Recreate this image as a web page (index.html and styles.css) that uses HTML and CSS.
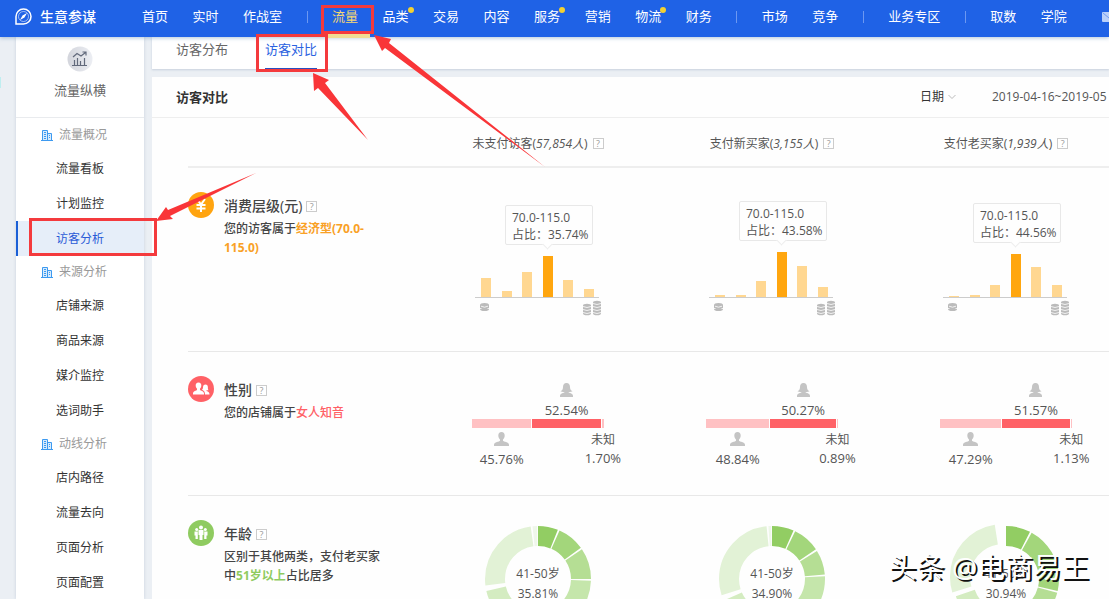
FILE: index.html
```
<!DOCTYPE html>
<html lang="zh-CN">
<head>
    <meta charset="UTF-8">
    <meta name="viewport" content="width=device-width, initial-scale=1.0">
    <title>生意参谋</title>
    <link rel="stylesheet" href="styles.css">
</head>
<body>
    <svg class="sprite" aria-hidden="true">
        <symbol id="building" viewBox="0 0 12 12">
            <path fill="#3d9af0" fill-opacity=".2" d="M1.500 1.500h5v3h4v7h-9z"/>
            <path fill="none" stroke="currentColor" d="M0 11.500h12M1.500 11V1.500h5V11M6.500 4.500h4V11M3 3.500h2M3 5.500h2M3 7.500h2M3 9.500h2M8 6.500h1M8 8.500h1"/>
        </symbol>
        <symbol id="man" viewBox="0 0 15 14">
            <path fill="currentColor" d="M7.500 0C5.400 0 4.300 1.400 4.300 3.500c0 1.800.7 3.200 1.700 4v1.300C5.600 9.800 0 9.800 0 12.800V14h15v-1.200c0-3-5.600-3-6-4V7.500c1-.8 1.700-2.200 1.700-4C10.700 1.400 9.600 0 7.500 0z"/>
        </symbol>
        <symbol id="woman" viewBox="0 0 15 14">
            <path fill="currentColor" d="M7.500 0C5 0 4 1.800 4 4c0 2-.5 3.300-2.500 4.300 1.200.8 2.600.9 4 .7C5.200 10.200 1 10 1 12.800V14h13v-1.200C14 10 9.800 10.200 9.500 9c1.400.2 2.800.1 4-.7C11.500 7.300 11 6 11 4c0-2.200-1-4-3.500-4z"/>
        </symbol>
        <symbol id="coin-low" viewBox="0 0 9 16">
            <path fill="#bbb" d="M0 5a4.500 2 0 0 1 9 0v4a4.500 2 0 0 1-9 0z"/>
            <path fill="none" stroke="#fff" stroke-width=".8" d="M1 6.200q3.500 2 7 0M0 8.500h1.500M7.500 8.500H9"/>
        </symbol>
        <symbol id="coin-high" viewBox="0 0 18 16">
            <path fill="#bbb" d="M0 5.500a4 1.800 0 0 1 8 0v8a4 1.800 0 0 1-8 0zM10 2.500a4 1.800 0 0 1 8 0v11a4 1.800 0 0 1-8 0z"/>
            <path fill="none" stroke="#fff" stroke-width=".8" d="M0 6.500q4 2 8 0M0 9.500q4 2 8 0M0 12.500q4 2 8 0M10 3.500q4 2 8 0M10 6.500q4 2 8 0M10 9.500q4 2 8 0M10 12.500q4 2 8 0"/>
        </symbol>
    </svg>

    <header class="topbar">
        <a class="brand" href="#">
            <svg class="brand-icon" viewBox="0 0 17 17">
                <path fill="none" stroke="#fff" stroke-width="1.500" d="M1 16V8.500A7.500 7.500 0 1 1 8.500 16z"/>
                <circle cx="8.500" cy="8.500" r="5" fill="none" stroke="#fff" stroke-width=".8" opacity=".7"/>
                <path fill="#fff" d="M12 5L9.500 9.500 5 12l2.500-4.500z"/>
            </svg>
            <span>生意参谋</span>
        </a>
        <nav class="topnav">
            <a href="#">首页</a>
            <a href="#">实时</a>
            <a href="#">作战室</a>
            <i class="sep"></i>
            <a href="#" class="active">流量</a>
            <a href="#" class="dot">品类</a>
            <a href="#">交易</a>
            <a href="#">内容</a>
            <a href="#" class="dot">服务</a>
            <a href="#">营销</a>
            <a href="#" class="dot">物流</a>
            <a href="#">财务</a>
            <i class="sep"></i>
            <a href="#">市场</a>
            <a href="#">竞争</a>
            <i class="sep"></i>
            <a href="#">业务专区</a>
            <i class="sep"></i>
            <a href="#">取数</a>
            <a href="#">学院</a>
        </nav>
        <a class="mail" href="#" aria-label="消息">
            <svg viewBox="0 0 14 10"><rect width="14" height="10" rx="1" fill="#b9d0fa"/><path d="M1 1l6 5 6-5" fill="none" stroke="#6f9bf2"/></svg>
        </a>
    </header>

    <div class="page">
        <aside class="sidebar">
            <div class="side-head">
                <svg class="side-logo" viewBox="0 0 26 26">
                    <defs><linearGradient id="silver" x1="0" x2="1"><stop offset="0" stop-color="#d3d5dc"/><stop offset="1" stop-color="#eceef3"/></linearGradient></defs>
                    <circle cx="13" cy="13" r="12.500" fill="url(#silver)"/>
                    <path fill="none" stroke="#626a7c" stroke-width="1.200" d="M5 19.500h15M7.500 19v-5M10.500 19v-7M13.500 19v-4M17.500 19v-7M6 11l4-3.500 4 2.500 4.500-3.500M15.500 6h3.500v3.500"/>
                </svg>
                <span>流量纵横</span>
            </div>
            <h3 class="side-group"><svg><use href="#building"/></svg>流量概况</h3>
            <a class="side-item" href="#">流量看板</a>
            <a class="side-item" href="#">计划监控</a>
            <a class="side-item active" href="#">访客分析</a>
            <h3 class="side-group"><svg><use href="#building"/></svg>来源分析</h3>
            <a class="side-item" href="#">店铺来源</a>
            <a class="side-item" href="#">商品来源</a>
            <a class="side-item" href="#">媒介监控</a>
            <a class="side-item" href="#">选词助手</a>
            <h3 class="side-group"><svg><use href="#building"/></svg>动线分析</h3>
            <a class="side-item" href="#">店内路径</a>
            <a class="side-item" href="#">流量去向</a>
            <a class="side-item" href="#">页面分析</a>
            <a class="side-item" href="#">页面配置</a>
        </aside>

        <main class="main">
            <nav class="tabs">
                <a href="#">访客分布</a>
                <a href="#" class="active">访客对比</a>
            </nav>

            <section class="panel">
                <div class="panel-head">
                    <h2>访客对比</h2>
                    <div class="picker">
                        <select aria-label="日期"><option>日期</option></select>
                        <svg viewBox="0 0 8 6"><path fill="none" stroke="#bbb" d="M.5 1L4 4.500 7.500 1"/></svg>
                    </div>
                    <span class="range">2019-04-16~2019-05</span>
                </div>

                <div class="compare">
                    <div class="row head-row">
                        <div class="cell"><span>未支付访客(<em>57,854人</em>)</span><button class="help">?</button></div>
                        <div class="cell"><span>支付新买家(<em>3,155人</em>)</span><button class="help">?</button></div>
                        <div class="cell"><span>支付老买家(<em>1,939人</em>)</span><button class="help">?</button></div>
                    </div>

                    <!-- 消费层级 -->
                    <div class="row level-row">
                        <div class="label orange">
                            <svg class="badge" viewBox="0 0 26 26">
                                <circle cx="13" cy="13" r="13" fill="#ffa410"/>
                                <path fill="none" stroke="#fff" stroke-width="2" d="M9 7l4 5.500L17 7M8.500 13h9M8.500 16.500h9M13 12v8"/>
                            </svg>
                            <div class="label-text">
                                <h4>消费层级(元)<button class="help">?</button></h4>
                                <p>您的访客属于<b>经济型(70.0-115.0)</b></p>
                            </div>
                        </div>
                        <div class="cell">
                            <div class="tip">70.0-115.0<br>占比：35.74%</div>
                            <div class="bars">
                                <i style="height:19px"></i><i style="height:6px"></i><i style="height:25px"></i><i class="max" style="height:41px"></i><i style="height:17px"></i><i style="height:8px"></i>
                            </div>
                            <div class="coins"><svg class="low"><use href="#coin-low"/></svg><svg class="high"><use href="#coin-high"/></svg></div>
                        </div>
                        <div class="cell">
                            <div class="tip">70.0-115.0<br>占比：43.58%</div>
                            <div class="bars">
                                <i style="height:2px"></i><i style="height:2px"></i><i style="height:16px"></i><i class="max" style="height:45px"></i><i style="height:31px"></i><i style="height:10px"></i>
                            </div>
                            <div class="coins"><svg class="low"><use href="#coin-low"/></svg><svg class="high"><use href="#coin-high"/></svg></div>
                        </div>
                        <div class="cell">
                            <div class="tip">70.0-115.0<br>占比：44.56%</div>
                            <div class="bars">
                                <i style="height:1px"></i><i style="height:2px"></i><i style="height:12px"></i><i class="max" style="height:43px"></i><i style="height:30px"></i><i style="height:12px"></i>
                            </div>
                            <div class="coins"><svg class="low"><use href="#coin-low"/></svg><svg class="high"><use href="#coin-high"/></svg></div>
                        </div>
                    </div>

                    <!-- 性别 -->
                    <div class="row gender-row">
                        <div class="label red">
                            <svg class="badge" viewBox="0 0 26 26">
                                <circle cx="13" cy="13" r="13" fill="#ff6166"/>
                                <path fill="#fff" d="M10.500 6.500c-2 0-3 1.300-2.800 3.300.1 1.300.6 2.200 1.300 2.900v1.100C8.500 15 5 15 5 17.500V18.500h11v-1c0-2.500-3.500-2.500-4-3.700v-1.100c.7-.7 1.200-1.600 1.300-2.900.2-2-.8-3.300-2.800-3.300z"/>
                                <path fill="#fff" d="M17.500 8.500c-1.700 0-2.500 1.200-2.500 3 0 1-.3 1.800-1 2.300 2 .8 3 2.200 3 4.700h4.500c0-2-1-3-3-3.500v-.8h2c-.6-.8-.6-1.600-.6-2.700 0-1.800-.7-3-2.400-3z"/>
                            </svg>
                            <div class="label-text">
                                <h4>性别<button class="help">?</button></h4>
                                <p>您的店铺属于<b>女人知音</b></p>
                            </div>
                        </div>
                        <div class="cell">
                            <div class="gender" style="grid-template-columns:minmax(0,45.76fr) minmax(0,52.54fr) minmax(0,1.7fr)">
                                <div class="female"><svg><use href="#woman"/></svg><span>52.54%</span></div>
                                <i class="bar-male"></i><i class="bar-female"></i><i class="bar-unknown"></i>
                                <div class="male"><svg><use href="#man"/></svg><span>45.76%</span></div>
                                <div class="unknown">未知<span>1.70%</span></div>
                            </div>
                        </div>
                        <div class="cell">
                            <div class="gender" style="grid-template-columns:minmax(0,48.84fr) minmax(0,50.27fr) minmax(0,0.89fr)">
                                <div class="female"><svg><use href="#woman"/></svg><span>50.27%</span></div>
                                <i class="bar-male"></i><i class="bar-female"></i><i class="bar-unknown"></i>
                                <div class="male"><svg><use href="#man"/></svg><span>48.84%</span></div>
                                <div class="unknown">未知<span>0.89%</span></div>
                            </div>
                        </div>
                        <div class="cell">
                            <div class="gender" style="grid-template-columns:minmax(0,47.29fr) minmax(0,51.57fr) minmax(0,1.13fr)">
                                <div class="female"><svg><use href="#woman"/></svg><span>51.57%</span></div>
                                <i class="bar-male"></i><i class="bar-female"></i><i class="bar-unknown"></i>
                                <div class="male"><svg><use href="#man"/></svg><span>47.29%</span></div>
                                <div class="unknown">未知<span>1.13%</span></div>
                            </div>
                        </div>
                    </div>

                    <!-- 年龄 -->
                    <div class="row age-row">
                        <div class="label green">
                            <svg class="badge" viewBox="0 0 26 26">
                                <circle cx="13" cy="13" r="13" fill="#8fcb60"/>
                                <g fill="#fff">
                                    <circle cx="13" cy="7.500" r="2"/><circle cx="8.700" cy="9.500" r="1.500"/><circle cx="17.300" cy="9.500" r="1.500"/>
                                    <path d="M10.500 10h5v5h-1v5h-3v-5h-1zM6.500 11.500h3.300V19H7.500v-3.500h-1zM16.200 11.500h3.300v4h-1V19h-2.300z"/>
                                </g>
                            </svg>
                            <div class="label-text">
                                <h4>年龄<button class="help">?</button></h4>
                                <p>区别于其他两类，支付老买家中<b>51岁以上</b>占比居多</p>
                            </div>
                        </div>
                        <div class="cell">
                            <div class="donut">
                                <svg viewBox="0 0 108 108">
                                    <g fill="none" stroke-width="20" transform="rotate(-90 54 54)">
                                        <circle cx="54" cy="54" r="43" pathLength="360" stroke="#92cd63" stroke-dasharray="22 338"/>
                                        <circle cx="54" cy="54" r="43" pathLength="360" stroke="#a3d67b" stroke-dasharray="30 330" stroke-dashoffset="-24"/>
                                        <circle cx="54" cy="54" r="43" pathLength="360" stroke="#b5de94" stroke-dasharray="34 326" stroke-dashoffset="-56"/>
                                        <circle cx="54" cy="54" r="43" pathLength="360" stroke="#c5e6ab" stroke-dasharray="40 320" stroke-dashoffset="-92"/>
                                        <circle cx="54" cy="54" r="43" pathLength="360" stroke="#d4ecc1" stroke-dasharray="123 237" stroke-dashoffset="-134"/>
                                        <circle cx="54" cy="54" r="43" pathLength="360" stroke="#e2f2d6" stroke-dasharray="89 271" stroke-dashoffset="-263"/>
                                        <circle cx="54" cy="54" r="43" pathLength="360" stroke="#eff7ea" stroke-dasharray="5 355" stroke-dashoffset="-354"/>
                                    </g>
                                </svg>
                                <p>41-50岁<br>35.81%</p>
                            </div>
                        </div>
                        <div class="cell">
                            <div class="donut">
                                <svg viewBox="0 0 108 108">
                                    <g fill="none" stroke-width="20" transform="rotate(-90 54 54)">
                                        <circle cx="54" cy="54" r="43" pathLength="360" stroke="#92cd63" stroke-dasharray="24 336"/>
                                        <circle cx="54" cy="54" r="43" pathLength="360" stroke="#a3d67b" stroke-dasharray="30 330" stroke-dashoffset="-26"/>
                                        <circle cx="54" cy="54" r="43" pathLength="360" stroke="#b5de94" stroke-dasharray="27 333" stroke-dashoffset="-58"/>
                                        <circle cx="54" cy="54" r="43" pathLength="360" stroke="#c5e6ab" stroke-dasharray="40 320" stroke-dashoffset="-87"/>
                                        <circle cx="54" cy="54" r="43" pathLength="360" stroke="#d4ecc1" stroke-dasharray="117 243" stroke-dashoffset="-129"/>
                                        <circle cx="54" cy="54" r="43" pathLength="360" stroke="#e2f2d6" stroke-dasharray="102 258" stroke-dashoffset="-252"/>
                                        <circle cx="54" cy="54" r="43" pathLength="360" stroke="#eff7ea" stroke-dasharray="3 357" stroke-dashoffset="-356"/>
                                    </g>
                                </svg>
                                <p>41-50岁<br>34.90%</p>
                            </div>
                        </div>
                        <div class="cell">
                            <div class="donut">
                                <svg viewBox="0 0 108 108">
                                    <g fill="none" stroke-width="20" transform="rotate(-90 54 54)">
                                        <circle cx="54" cy="54" r="43" pathLength="360" stroke="#92cd63" stroke-dasharray="27 333"/>
                                        <circle cx="54" cy="54" r="43" pathLength="360" stroke="#a3d67b" stroke-dasharray="74 286" stroke-dashoffset="-29"/>
                                        <circle cx="54" cy="54" r="43" pathLength="360" stroke="#b5de94" stroke-dasharray="40 320" stroke-dashoffset="-105"/>
                                        <circle cx="54" cy="54" r="43" pathLength="360" stroke="#d4ecc1" stroke-dasharray="104 256" stroke-dashoffset="-147"/>
                                        <circle cx="56" cy="51" r="43" pathLength="360" stroke="#e2f2d6" stroke-dasharray="98 262" stroke-dashoffset="-253"/>
                                    </g>
                                </svg>
                                <p>41-50岁<br>30.94%</p>
                            </div>
                        </div>
                    </div>
                </div>
            </section>
        </main>
    </div>

    <!-- 标注层 -->
    <svg class="marks" aria-hidden="true">
        <rect x="0" y="77" width="1" height="11" fill="#bfeef0"/>
        <g fill="none" stroke="#f43a3d" stroke-width="3">
            <rect x="322.500" y="6.500" width="50" height="26"/>
            <rect x="257.500" y="35.500" width="69" height="35"/>
            <rect x="30.500" y="219.500" width="125" height="35"/>
        </g>
        <g fill="#f93538">
            <path d="M374 35L391 39 389 43 545 167 385 48 382 51z"/>
            <path d="M313 73L329 80 325 83 368 140 318 88 314 91z"/>
            <path d="M156 221L166 207 168 210 256 173 170 216 173 219z"/>
        </g>
    </svg>
    <div class="watermark">头条 @电商易王</div>
</body>
</html>
```

FILE: styles.css
```
* {
    box-sizing: border-box;
}

body {
    margin: 0;
    height: 100vh;
    overflow: hidden;
    display: flex;
    flex-direction: column;
    font-family: "Open Sans", "Noto Sans CJK SC", sans-serif;
    font-size: 12px;
    line-height: 18px;
    color: #555;
    background-color: #ebeff4;
}

h2, h3, h4, p {
    margin: 0;
}

a {
    color: inherit;
    text-decoration: none;
}

svg {
    display: block;
    flex: none;
}

.sprite {
    position: absolute;
    width: 0;
    height: 0;
}

/* top bar */
.topbar {
    position: relative;
    z-index: 2;
    flex: none;
    display: flex;
    align-items: center;
    height: 37px;
    padding: 0 0 4px 15px;
    font-size: 13px;
    color: #fff;
    background-color: #1f62e6;
    box-shadow: 0 1px 4px rgba(60, 110, 160, 0.4);
}

.brand {
    display: flex;
    align-items: center;
    gap: 8px;
    width: 127px;
    font-size: 14px;
    font-weight: 500;
}

.brand-icon {
    width: 17px;
    height: 17px;
}

.topnav {
    flex: 1;
    display: flex;
    justify-content: space-between;
    align-items: center;
    white-space: nowrap;
}

.topnav a {
    position: relative;
    line-height: 33px;
}

.topnav .active {
    color: #f6d873;
}

.topnav .active::after {
    content: "";
    position: absolute;
    left: -4px;
    right: -12px;
    bottom: -5px;
    height: 4px;
    background-color: #f0dc92;
}

.topnav .dot::after {
    content: "";
    position: absolute;
    top: 7px;
    right: -5px;
    width: 6px;
    height: 6px;
    border-radius: 50%;
    background-color: #f3d132;
}

.sep {
    width: 1px;
    height: 12px;
    background-color: #6c98f1;
}

.mail {
    margin: 0 -7px 0 35px;
}

.mail svg {
    width: 14px;
    height: 10px;
}

/* page columns */
.page {
    flex: 1;
    min-height: 0;
    display: flex;
    gap: 8px;
    padding-left: 16px;
}

.sidebar {
    flex: none;
    width: 128px;
    background-color: #fff;
    box-shadow: 0 0 3px rgba(120, 140, 170, 0.3);
}

.side-head {
    display: flex;
    flex-direction: column;
    align-items: center;
    gap: 9px;
    height: 81px;
    margin-bottom: 1px;
    padding-top: 9px;
    border-bottom: 1px solid #e9ebee;
    font-size: 13px;
    color: #666;
}

.side-logo {
    width: 26px;
    height: 26px;
}

.side-group {
    display: flex;
    align-items: center;
    gap: 6px;
    height: 32px;
    padding-left: 25px;
    font-size: 12px;
    font-weight: 400;
    color: #999;
}

.side-group svg {
    width: 12px;
    height: 12px;
    color: #3d9af0;
}

.side-item {
    display: block;
    height: 35px;
    line-height: 35px;
    text-align: center;
    color: #333;
}

.side-item.active {
    color: #2a5bd7;
    background-color: #e6eef9;
    box-shadow: inset 2px 0 #1a5fd6;
}

.main {
    flex: 1;
    min-width: 0;
    display: flex;
    flex-direction: column;
    gap: 8px;
}

.tabs {
    flex: none;
    display: flex;
    gap: 37px;
    height: 32px;
    padding-left: 24px;
    font-size: 13px;
    line-height: 24px;
    color: #666;
    background-color: #fff;
    box-shadow: 0 1px 2px rgba(120, 140, 170, 0.3);
}

.tabs .active {
    color: #2a62e0;
    border-bottom: 1px solid #2a4fc0;
}

.panel {
    flex: 1;
    min-height: 0;
    background-color: #fefefe;
    overflow: hidden;
}

.panel-head {
    display: flex;
    align-items: center;
    height: 41px;
    padding-left: 24px;
    border-bottom: 1px solid #eee;
}

.panel-head h2 {
    margin-right: auto;
    font-size: 13px;
    color: #333;
}

.picker {
    display: flex;
    align-items: center;
    gap: 3px;
    margin-right: 36px;
}

.picker svg {
    width: 8px;
    height: 6px;
}

.picker select {
    appearance: none;
    padding: 0;
    border: 0;
    font: inherit;
    color: #333;
    background: none;
}

.range {
    width: 117px;
    white-space: nowrap;
}

/* comparison rows */
.compare {
    padding-left: 36px;
}

.row {
    display: grid;
    grid-template-columns: 284px repeat(3, 234px);
    border-bottom: 1px solid #e8e8e8;
}

.cell {
    width: 132px;
}

.help {
    display: inline-block;
    flex: none;
    width: 11px;
    height: 11px;
    padding: 0;
    border: 1px solid #ccc;
    font-family: "Open Sans", sans-serif;
    font-size: 9px;
    line-height: 9px;
    color: #999;
    background-color: #fff;
}

.head-row {
    height: 50px;
    align-items: center;
    padding-top: 3px;
    border-bottom: 2px solid #eee;
}

.head-row .cell {
    display: flex;
    justify-content: center;
    align-items: center;
    gap: 5px;
    white-space: nowrap;
}

.head-row .cell:first-child {
    grid-column: 2;
}

.label {
    display: flex;
    gap: 10px;
    padding-top: 24px;
}

.badge {
    width: 26px;
    height: 26px;
}

.label-text {
    width: 164px;
    padding-top: 3px;
}

.label h4 {
    display: flex;
    align-items: center;
    gap: 4px;
    font-size: 14px;
    font-weight: 500;
    line-height: 22px;
    color: #444;
}

.label p {
    padding-top: 2px;
    font-weight: 500;
    line-height: 19px;
    color: #444;
}

.orange b {
    color: #f9a126;
}

.red b {
    font-weight: 500;
    color: #ff6166;
}

.green b {
    color: #8fcb60;
}

.level-row {
    min-height: 184px;
}

.level-row .cell {
    align-self: end;
    padding-bottom: 35px;
}

.tip {
    position: relative;
    width: 88px;
    margin: 0 0 11px 33px;
    padding: 3px 0 1px 6px;
    border: 1px solid #e8e8e8;
    border-radius: 2px;
    line-height: 17px;
    white-space: nowrap;
}

.tip::after {
    content: "";
    position: absolute;
    left: 38px;
    bottom: -4px;
    width: 6px;
    height: 6px;
    border: solid #eee;
    border-width: 0 1px 1px 0;
    background-color: #fff;
    transform: rotate(45deg);
}

.bars {
    display: flex;
    justify-content: space-between;
    align-items: flex-end;
    width: 124px;
    margin-left: 3px;
    padding: 0 5px 0 6px;
    border-bottom: 1px solid #ccc;
}

.bars i {
    width: 10px;
    background-color: #ffd791;
}

.bars .max {
    background-color: #ffa60f;
}

.coins {
    display: flex;
    justify-content: space-between;
    padding: 2px 3px 0 8px;
}

.coins svg {
    width: 18px;
    height: 16px;
}

.coins .low {
    width: 9px;
}

.gender-row {
    min-height: 144px;
}

.gender {
    display: grid;
    grid-template-rows: 36px 9px auto;
    column-gap: 1px;
    padding-top: 31px;
}

.gender i {
    grid-row: 2;
    background-color: #ffc1c3;
}

.gender .bar-male {
    grid-column: 1;
}

.gender .bar-female {
    grid-column: 2;
    background-color: #ff6166;
}

.gender .bar-unknown {
    grid-column: 3;
}

.female, .male {
    display: flex;
    flex-direction: column;
    align-items: center;
    gap: 4px;
}

.female {
    grid-column: 2;
    grid-row: 1;
}

.male {
    grid-column: 1;
    grid-row: 3;
    padding-top: 4px;
}

.unknown {
    grid-column: 3;
    grid-row: 3;
    justify-self: center;
    padding-top: 3px;
    text-align: center;
    white-space: nowrap;
}

.gender svg {
    width: 15px;
    height: 14px;
    color: #c4c4c4;
}

.gender span {
    display: block;
    font-size: 13px;
}

.age-row {
    min-height: 164px;
}

.donut {
    display: grid;
    justify-content: center;
    padding-top: 29px;
}

.donut svg {
    grid-area: 1 / 1;
    width: 108px;
    height: 108px;
    overflow: visible;
}

.donut p {
    grid-area: 1 / 1;
    padding-top: 39px;
    line-height: 20px;
    text-align: center;
}

/* annotations over the page */
.marks {
    position: absolute;
    inset: 0;
    z-index: 3;
    width: 100%;
    height: 100%;
    pointer-events: none;
}

.watermark {
    position: absolute;
    right: 20px;
    bottom: 12px;
    z-index: 4;
    font-size: 28px;
    line-height: 40px;
    color: #fff;
    text-shadow: 2px 2px 0 #111;
    white-space: nowrap;
}
```
